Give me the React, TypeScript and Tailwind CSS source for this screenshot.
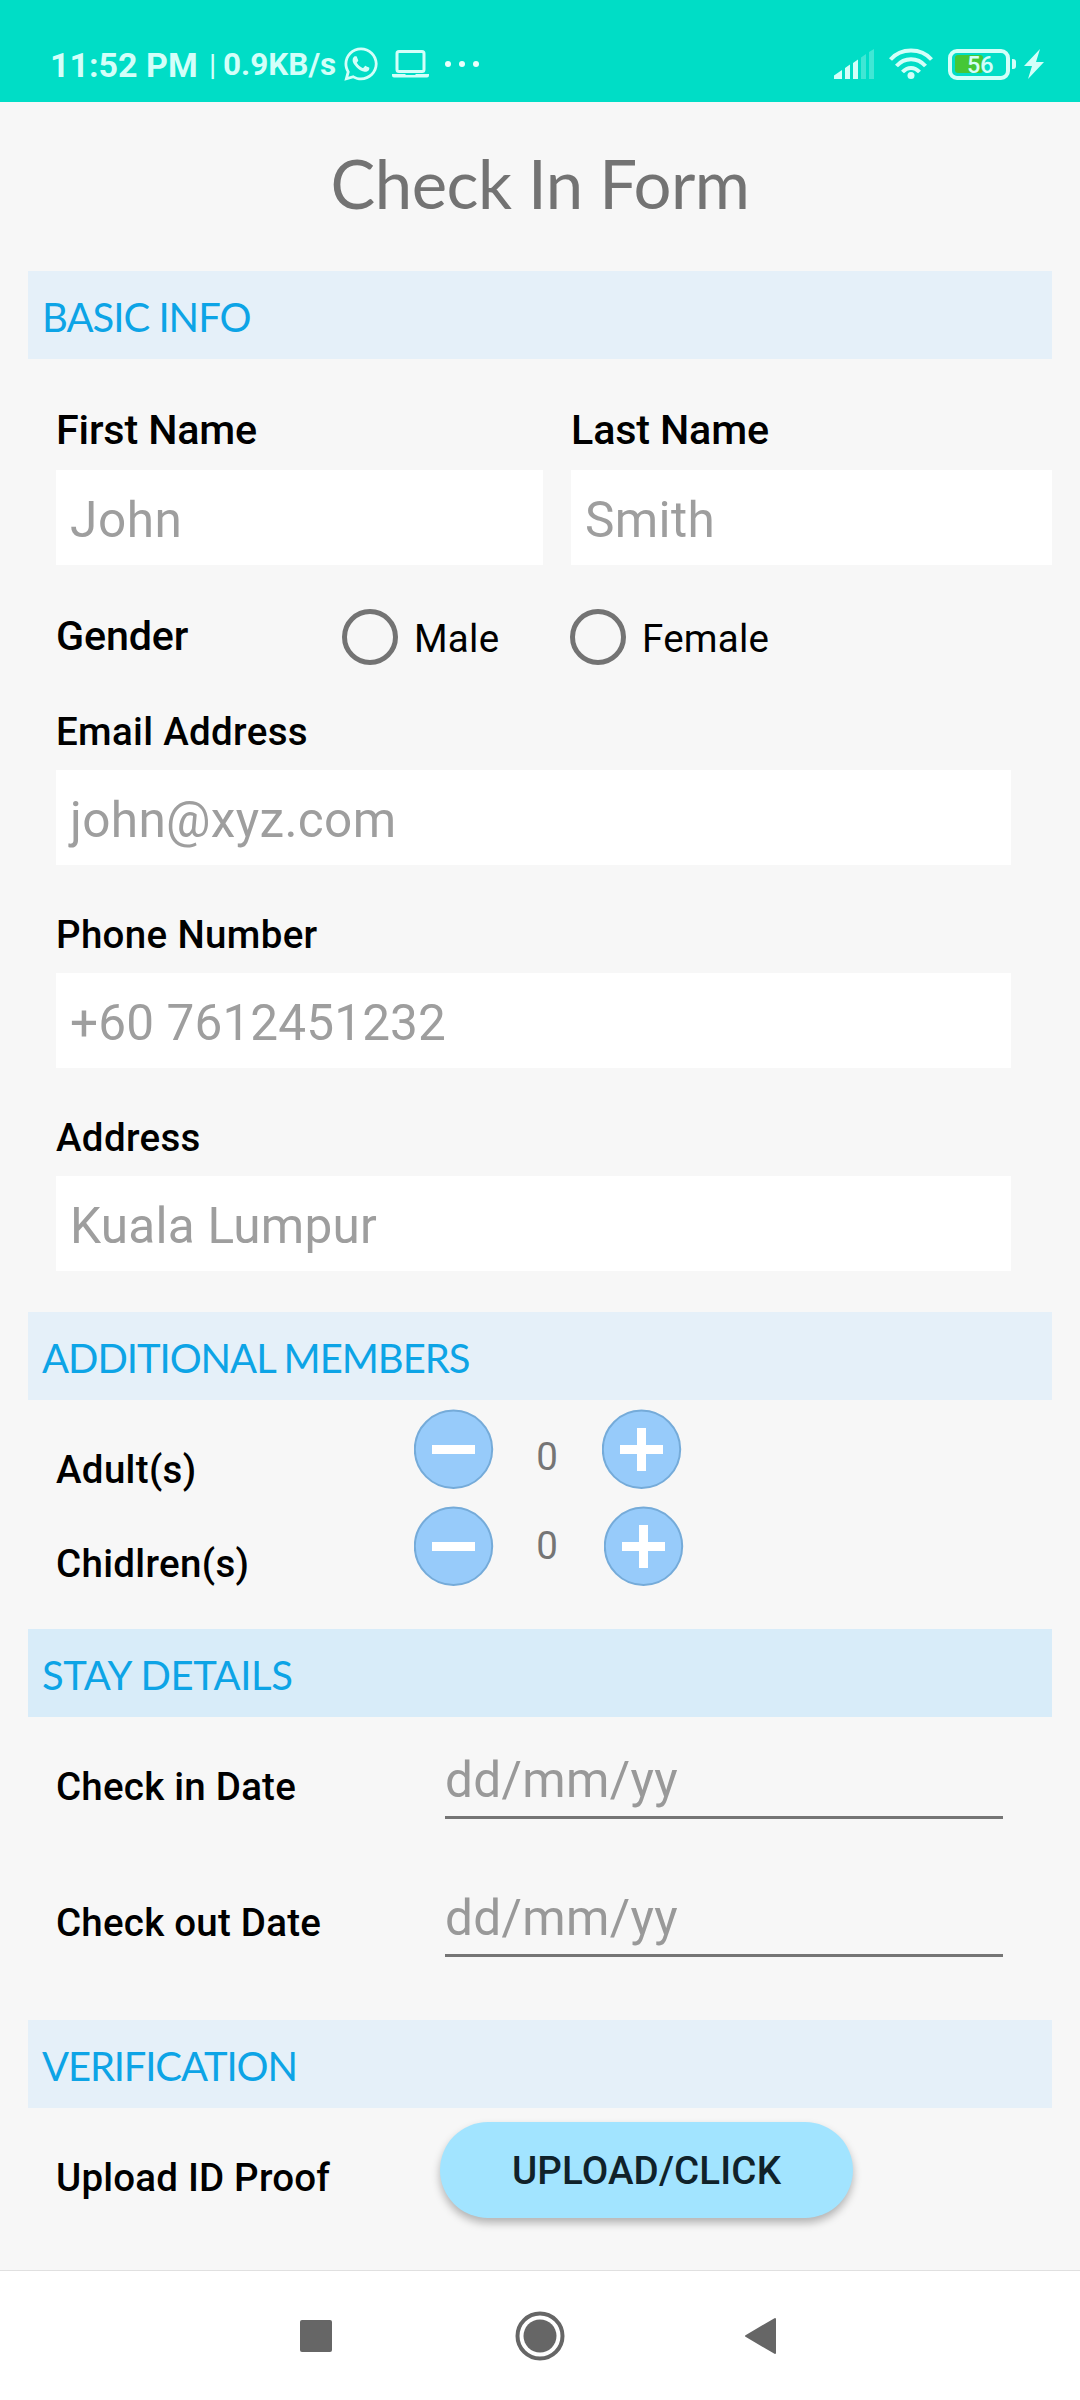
import React from "react";
import { FaWhatsapp } from "react-icons/fa";

function StatusBar() {
  return (
    <header className="flex h-[102px] shrink-0 items-end bg-[#00ddc6] pl-[50px] text-[#d3fff9]">
      <div className="mb-[15px] flex h-[45px] items-center whitespace-nowrap">
        <span className="w-[159px] text-[34px] leading-[40px] font-bold">11:52 PM</span>
        <span className="w-[14px] text-[29px] leading-[36px] font-medium">|</span>
        <span className="w-[119px] text-[31.500px] leading-[40px] font-bold">0.9KB/s</span>
      </div>
      <div className="mb-[20px] flex h-[36px] flex-1 items-center">
        <FaWhatsapp className="size-[38px]" />
        <svg className="ml-[12px]" width="38" height="28" viewBox="0 0 38 28" fill="none">
          <rect x="5" y="1.5" width="27" height="20" rx="2" stroke="currentColor" strokeWidth="3" />
          <path d="M0 24h13l1 1h9l1-1h13v1.500a2 2 0 0 1-2 2H2a2 2 0 0 1-2-2z" fill="currentColor" />
        </svg>
        <div className="ml-[15px] flex gap-[8px]">
          <i className="size-[6px] rounded-full bg-[#eafffc]" />
          <i className="size-[6px] rounded-full bg-[#eafffc]" />
          <i className="size-[6px] rounded-full bg-[#eafffc]" />
        </div>
      </div>
      <div className="mr-[36px] mb-[22px] flex h-[32px] items-center">
        <svg width="40" height="30" viewBox="0 0 40 30" fill="currentColor">
          <path d="M0 26.500L8 21v9H0zM11 19l5-3.500V30h-5zM19 14l5-3.500V30h-5z" />
          <path d="M27 8.500L32 5v25h-5zM35 3l5-3v30h-5z" opacity=".3" />
        </svg>
        <svg className="ml-[15px]" width="44" height="32" viewBox="0 0 44 32" fill="none" stroke="currentColor" strokeWidth="4">
          <path d="M1.500 11.500C12-.5 32-.5 42.500 11.500M7.500 18C15.500 9 28.500 9 36.500 18M13.500 24C18.500 18.500 25.500 18.500 30.500 24" />
          <circle cx="22" cy="27.500" r="3.500" fill="currentColor" stroke="none" />
        </svg>
        <div className="ml-[15px] flex h-[31px] w-[62px] items-center rounded-[9px] border-[4px] border-current pl-[3px]">
          <div className="h-[18px] w-[28px] rounded-[3px] bg-[#45c736]" />
          <span className="-ml-[16px] pt-[2px] text-[23.500px] leading-[24px] font-medium">56</span>
        </div>
        <i className="ml-[2px] h-[10px] w-[4px] rounded-r-[3px] bg-current" />
        <svg className="ml-[8px]" width="20" height="30" viewBox="0 0 20 30" fill="currentColor">
          <path d="M16 0L0 17h8L4 30 20 13h-8z" />
        </svg>
      </div>
    </header>
  );
}

function SectionBar({ title, className }: { title: string; className: string }) {
  return (
    <h2 className={`mx-[28px] h-[88px] shrink-0 pl-[14px] font-[Lato] text-[40px] leading-[93px] whitespace-nowrap text-[#0da4e6] ${className}`}>
      {title}
    </h2>
  );
}

function Box({ text, className = "tracking-[0.35px]" }: { text: string; className?: string }) {
  return (
    <div className={`h-[95px] bg-white pl-[14px] text-[49.500px] leading-[100px] text-[#9e9e9e] ${className}`}>{text}</div>
  );
}

function Field({ label, value, className }: { label: string; value: string; className?: string }) {
  return (
    <div className="mr-[69px] ml-[56px] h-[203px] shrink-0">
      <div className="h-[56px] text-[38.500px] leading-[36px] font-medium tracking-[0.33px]">{label}</div>
      <Box text={value} className={className} />
    </div>
  );
}

function Radio({ label }: { label: string }) {
  return (
    <div className="flex items-center">
      <i className="size-[56px] rounded-full border-[5.500px] border-[#737373]" />
      <span className="ml-[16px] pt-[4px] text-[38.500px] leading-[44px] tracking-[0.25px]">{label}</span>
    </div>
  );
}

function RoundButton({ plus = false, className }: { plus?: boolean; className: string }) {
  return (
    <svg className={`shrink-0 ${className}`} width="80" height="80" viewBox="0 0 80 80">
      <circle cx="39.500" cy="40.300" r="38.700" fill="#97cbfa" stroke="#75abd9" strokeWidth="2" />
      <path d={plus ? "M18 40.500h43M39.500 19v43" : "M18 40.500h43"} stroke="#fff" strokeWidth="9" />
    </svg>
  );
}

function DateField({ value }: { value: string }) {
  return (
    <div className="h-[72px] w-[558px] border-b-[3px] border-[#757575] text-[49.500px] leading-[66px] tracking-[0.35px] text-[#999]">{value}</div>
  );
}

export default function App() {
  return (
    <div className="flex h-[2400px] w-[1080px] flex-col overflow-hidden bg-[#f7f7f7] font-[Roboto] text-black">
      <StatusBar />
      <h1 className="h-[169px] shrink-0 text-center font-[Lato] text-[67px] leading-[163px] tracking-[-0.55px] whitespace-nowrap text-[#737373]">
        Check In Form
      </h1>
      <SectionBar title="BASIC INFO" className="bg-[#e5f0f9] tracking-[-1px]" />

      <div className="mt-[50px] mr-[28px] ml-[56px] flex h-[156px] shrink-0 gap-[28px]">
        <div className="w-[487px]">
          <div className="h-[61px] text-[41.250px] leading-[42px] font-medium tracking-[-0.15px]">First Name</div>
          <Box text="John" className="tracking-[0.6px]" />
        </div>
        <div className="w-[481px]">
          <div className="h-[61px] text-[41.250px] leading-[42px] font-medium tracking-[-0.15px]">Last Name</div>
          <Box text="Smith" />
        </div>
      </div>

      <div className="mt-[44px] ml-[56px] flex h-[56px] shrink-0">
        <div className="w-[286px] text-[41.250px] leading-[54px] font-medium tracking-[-0.15px]">Gender</div>
        <div className="w-[228px]"><Radio label="Male" /></div>
        <Radio label="Female" />
      </div>

      <div className="mt-[49px] flex h-[598px] shrink-0 flex-col">
        <Field label="Email Address" value="john@xyz.com" />
        <Field label="Phone Number" value="+60 7612451232" className="tracking-[0.13px]" />
        <Field label="Address" value="Kuala Lumpur" className="tracking-[0.25px]" />
      </div>

      <SectionBar title="ADDITIONAL MEMBERS" className="bg-[#e5f0f9] tracking-[-1.05px]" />
      <div className="flex h-[229px] shrink-0 pl-[56px]">
        <div className="w-[357px] pt-[47px] text-[38.500px] font-medium tracking-[0.33px]">
          <div className="h-[94px] leading-[46px]">Adult(s)</div>
          <div className="leading-[46px]">Chidlren(s)</div>
        </div>
        <div className="flex flex-col gap-[17px] pt-[9px]">
          <RoundButton className="ml-[1px]" />
          <RoundButton className="ml-[1px]" />
        </div>
        <div className="w-[108px] pt-[34px] pr-[2px] text-center text-[38.500px] text-[#757575]">
          <div className="h-[89px] leading-[46px]">0</div>
          <div className="leading-[46px]">0</div>
        </div>
        <div className="flex flex-col gap-[17px] pt-[9px]">
          <RoundButton plus className="" />
          <RoundButton plus className="ml-[2px]" />
        </div>
      </div>

      <SectionBar title="STAY DETAILS" className="bg-[#d8ecf9] tracking-[-0.4px]" />
      <div className="flex h-[303px] shrink-0 pl-[56px]">
        <div className="w-[389px] pt-[47px] text-[38.500px] font-medium tracking-[0.23px]">
          <div className="h-[136px] leading-[46px]">Check in Date</div>
          <div className="leading-[46px]">Check out Date</div>
        </div>
        <div className="flex flex-col gap-[66px] pt-[30px]">
          <DateField value="dd/mm/yy" />
          <DateField value="dd/mm/yy" />
        </div>
      </div>

      <SectionBar title="VERIFICATION" className="bg-[#e5f0f9] tracking-[-1.15px]" />
      <div className="flex h-[162px] shrink-0 pl-[56px]">
        <div className="w-[384px] pt-[47px] text-[38.500px] leading-[46px] font-medium tracking-[0.2px]">Upload ID Proof</div>
        <button className="mt-[14px] h-[96px] w-[413px] rounded-full bg-[#a2e4ff] pt-[2px] text-[38.500px] leading-[94px] font-medium tracking-[0.15px] text-[#10222a] shadow-[0_5px_8px_rgba(0,0,0,0.28)]">
          UPLOAD/CLICK
        </button>
      </div>

      <nav className="flex h-[130px] shrink-0 items-center border-t border-[#e0e0e0] bg-white pl-[300px] text-[#666]">
        <i className="size-[32px] rounded-[2px] bg-current" />
        <svg className="ml-[183px]" width="50" height="50" viewBox="0 0 50 50">
          <circle cx="25" cy="25" r="22.500" fill="none" stroke="currentColor" strokeWidth="4" />
          <circle cx="25" cy="25" r="16.500" fill="currentColor" />
        </svg>
        <svg className="ml-[180px]" width="32" height="38" viewBox="0 0 32 38" fill="currentColor" stroke="currentColor" strokeWidth="2" strokeLinejoin="round">
          <path d="M1 19L30 2v34z" />
        </svg>
      </nav>
    </div>
  );
}
